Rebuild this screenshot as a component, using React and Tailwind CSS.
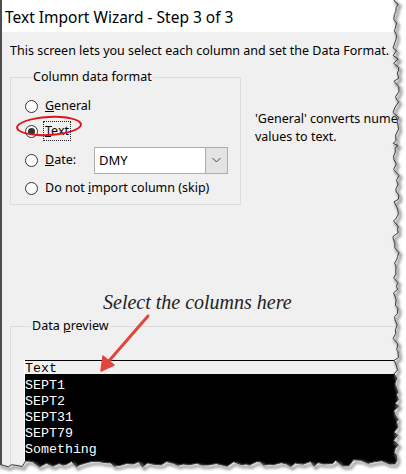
import React from 'react';

function rng(seed) {
  let s = seed;
  return () => {
    s = (s * 16807) % 2147483647;
    return (s - 1) / 2147483646;
  };
}

// torn right + bottom edge of the screenshot
function tornPoints() {
  const r = rng(11);
  const pts = [];
  let y = -2;
  while (y < 458) {
    pts.push([396 + (r() - 0.5) * 6, y]);
    y += 2 + r() * 4;
  }
  pts.push([397, 460]);
  let x = 395;
  while (x > -2) {
    const base = x > 300 ? 461 + (395 - x) * 0.04 : 464;
    pts.push([x, base + (r() - 0.5) * 6]);
    x -= 3 + r() * 5;
  }
  pts.push([-2, 464]);
  return pts;
}

const Torn = () => {
  const pts = tornPoints();
  const line = pts.map((p, i) => `${i ? 'L' : 'M'}${p[0].toFixed(1)} ${p[1].toFixed(1)}`).join(' ');
  const fill = `${line} L-2 476 L408 476 L408 -2 Z`;
  return (
    <svg className="absolute inset-0 pointer-events-none" width="406" height="474" viewBox="0 0 406 474">
      <defs>
        <filter id="blur" x="-10%" y="-10%" width="120%" height="120%">
          <feGaussianBlur stdDeviation="1.5" />
        </filter>
      </defs>
      <path d={fill} fill="#fff" />
      <path d={line} transform="translate(2 2.5)" fill="none" stroke="#8a8a8a" strokeWidth="2.5" filter="url(#blur)" />
      <path d={line} fill="none" stroke="#3a3a3a" strokeWidth="1" />
    </svg>
  );
};

const Radio = ({ checked }) => (
  <span className="w-[13px] h-[13px] rounded-full border border-[#333] bg-white flex items-center justify-center shrink-0">
    {checked && <span className="w-[7px] h-[7px] rounded-full bg-[#333]" />}
  </span>
);

const rows = ['SEPT1', 'SEPT2', 'SEPT31', 'SEPT79', 'Something'];

export default function App() {
  return (
    <div className="relative w-[406px] h-[474px] bg-white overflow-hidden [font-family:'Noto_Sans','Liberation_Sans',sans-serif] text-black">
      <div className="w-[400px] h-[466px] border-l-2 border-[#4d4d4d] flex flex-col">
        {/* title bar */}
        <div className="h-[32px] bg-white pl-[3px] text-[15.5px] leading-[34px] shrink-0 whitespace-nowrap">
          Text Import Wizard - Step 3 of 3
        </div>

        {/* body */}
        <div className="flex-1 bg-[#f0f0f0] text-[12.5px]">
          <p className="mt-[11px] ml-[8px] leading-[15px] whitespace-nowrap">
            This screen lets you select each column and set the Data Format.
          </p>

          <div className="flex mt-[11px]">
            <fieldset className="shrink-0 ml-[8px] w-[231px] h-[136px] border border-[#dcdcdc] pl-[14px] pr-[12px] pt-[8px]">
              <legend className="ml-[7px] px-[1px] leading-[16px]">Column data format</legend>
              <div className="h-[26px] flex items-center">
                <Radio />
                <span className="ml-[7px]"><u>G</u>eneral</span>
              </div>
              <div className="relative h-[24px] flex items-center">
                <Radio checked />
                <span className="ml-[6px] px-[1px] outline outline-1 outline-dotted outline-[#222] leading-[18px]"><u>T</u>ext</span>
                <span className="absolute left-[-9px] top-[-3px] w-[66px] h-[20px] rounded-[50%] border-2 border-[#e0151b] -rotate-3" />
              </div>
              <div className="h-[34px] flex items-center">
                <Radio />
                <span className="ml-[7px]"><u>D</u>ate:</span>
                <div className="ml-auto shrink-0 w-[134px] h-[27px] border border-[#adadad] bg-white flex">
                  <span className="flex-1 pl-[4px] leading-[25px] text-[13px]">DMY</span>
                  <span className="w-[22px] bg-[#e3e3e3] border-l border-[#adadad] flex items-center justify-center">
                    <svg width="9" height="6" viewBox="0 0 9 6"><path d="M0.5 1 L4.5 5 L8.5 1" fill="none" stroke="#444" strokeWidth="1" /></svg>
                  </span>
                </div>
              </div>
              <div className="h-[22px] flex items-center">
                <Radio />
                <span className="ml-[7px] whitespace-nowrap">Do not <u>i</u>mport column (skip)</span>
              </div>
            </fieldset>

            <div className="ml-[14px] mt-[41px] leading-[18px] whitespace-nowrap">
              <div>'General' converts numeric</div>
              <div>values to text.</div>
            </div>
          </div>

          <fieldset className="mt-[113px] ml-[8px] w-[420px] h-[160px] border border-[#dcdcdc] pl-[13px]">
            <legend className="ml-[7px] px-[1px] leading-[16px]">Data <u>p</u>review</legend>
            <div className="mt-[26px] border-l border-white [font-family:'Liberation_Mono',monospace] text-[13.3px]">
              <div className="h-[16px] bg-[#f0f0f0] border-t border-black border-b-2 leading-[16px] text-black">Text</div>
              <div className="bg-black text-white pt-[2px] pb-[20px]">
                {rows.map((t) => (
                  <div key={t} className="h-[16px] leading-[16px]">{t}</div>
                ))}
              </div>
            </div>
          </fieldset>
        </div>
      </div>

      {/* annotation */}
      <div className="absolute left-[103px] top-[290px] text-[20px] italic leading-[24px] text-[#222] [font-family:'Liberation_Serif',serif] whitespace-nowrap">
        Select the columns here
      </div>
      <svg className="absolute left-0 top-0 pointer-events-none" width="406" height="474">
        <line x1="148" y1="316" x2="108" y2="362" stroke="#e2453c" strokeWidth="3" strokeLinecap="round" />
        <path d="M101 371 L103 356 L114 365 Z" fill="#e2453c" stroke="#e2453c" strokeWidth="1.5" strokeLinejoin="round" />
      </svg>

      <Torn />
    </div>
  );
}
